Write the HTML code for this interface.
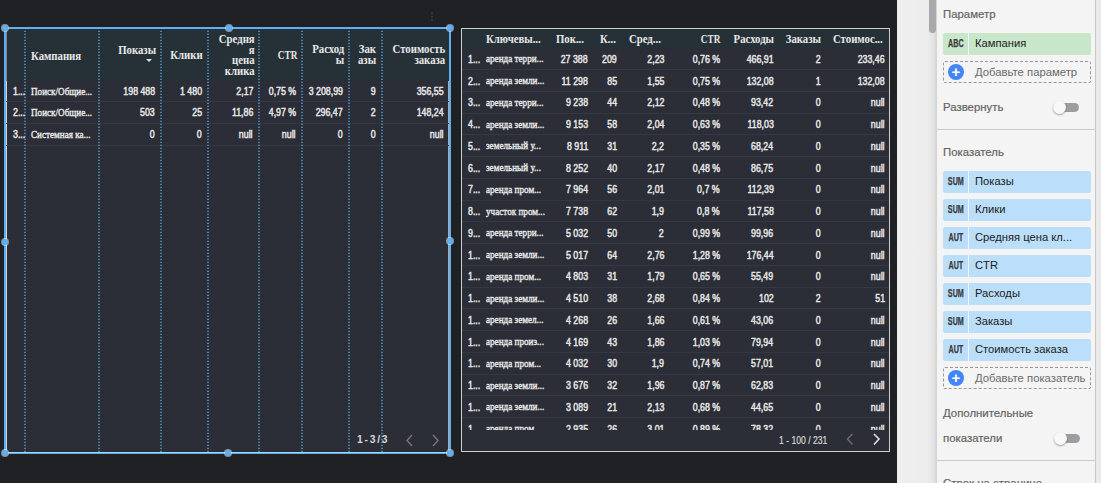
<!DOCTYPE html><html><head><meta charset="utf-8"><style>
*{margin:0;padding:0;box-sizing:border-box}
html,body{width:1101px;height:483px;overflow:hidden;background:#202124;font-family:"Liberation Sans",sans-serif}
.a{position:absolute;white-space:nowrap}
.hd{font-family:"Liberation Serif",serif;font-weight:bold;font-size:12.5px;color:#e8e8e8;line-height:10.6px;transform:scaleX(.86);transform-origin:0 0}
.sr{font-family:"Liberation Serif",serif;font-size:10.5px;color:#ececec;line-height:12px;transform:scaleX(.87);transform-origin:0 0;-webkit-text-stroke:0.35px #ececec}
.nm{font-family:"Liberation Sans",sans-serif;font-size:10px;color:#e8e8e8;line-height:12px;margin-top:0px;transform:scaleX(.88);transform-origin:0 0;-webkit-text-stroke:0.45px #e8e8e8}
.r{text-align:right;transform-origin:100% 0}
.dl{position:absolute;width:2px;background:linear-gradient(to bottom,#4f97d2 0 1.4px,transparent 1.4px);background-size:2px 3px;background-position:0 1.8px}
.hdl{position:absolute;width:8px;height:8px;border-radius:50%;background:#5eb0f5;box-shadow:0 0 0 1px rgba(220,235,250,.55)}
.sep{position:absolute;height:1px;background:#343744}
.pl{font-family:"Liberation Sans",sans-serif;color:#646464;font-size:11.4px;margin-top:0.6px;-webkit-text-stroke:0.2px #646464}
.chip{position:absolute;left:943px;width:148px;height:22px;border-radius:2px}
.chip .t{position:absolute;left:0;top:0;width:26px;height:22px;border-right:1px solid #f4f4f4;}
.chip .t span{position:absolute;left:0;top:0;width:26px;font-family:"Liberation Sans",sans-serif;font-weight:bold;font-size:10px;color:#3a3a3a;text-align:center;line-height:22px;transform:scaleX(.72);-webkit-text-stroke:0.25px #3a3a3a;transform-origin:12.5px 0}
.chip .n{position:absolute;left:32px;top:-1px;font-size:11.2px;color:#202020;line-height:22px}
</style></head><body>
<div class="a" style="left:6px;top:29px;width:443px;height:51.5px;background:#263137"></div>
<div class="a" style="left:6px;top:80.5px;width:443px;height:372px;background:#2b2e37"></div>
<div class="a" style="left:6px;top:29px;width:1px;height:51.5px;background:#7d868c"></div>
<div class="a" style="left:6px;top:80.5px;width:1px;height:372px;background:#d4d6d9"></div>
<div class="a" style="left:448px;top:80.5px;width:1px;height:372px;background:#a9abb0"></div>
<div class="sep" style="left:6px;top:101px;width:443px"></div>
<div class="sep" style="left:6px;top:123px;width:443px"></div>
<div class="sep" style="left:6px;top:145px;width:443px"></div>
<div class="dl" style="left:24px;top:29px;height:423px"></div>
<div class="dl" style="left:98px;top:29px;height:423px"></div>
<div class="dl" style="left:160px;top:29px;height:423px"></div>
<div class="dl" style="left:207px;top:29px;height:423px"></div>
<div class="dl" style="left:258px;top:29px;height:423px"></div>
<div class="dl" style="left:301px;top:29px;height:423px"></div>
<div class="dl" style="left:348px;top:29px;height:423px"></div>
<div class="dl" style="left:381px;top:29px;height:423px"></div>
<div class="a hd" style="left:31px;top:51px">Кампания</div>
<div class="a hd r" style="right:945px;top:45px">Показы</div>
<div class="a" style="left:146px;top:59px;width:0;height:0;border-left:3px solid transparent;border-right:3px solid transparent;border-top:3.5px solid #e0e0e0"></div>
<div class="a hd r" style="right:898.5px;top:50px">Клики</div>
<div class="a hd r" style="right:846.5px;top:34px">Средня<br>я<br>цена<br>клика</div>
<div class="a hd r" style="right:804px;top:50px;transform:scaleX(.74)">CTR</div>
<div class="a hd r" style="right:757px;top:44.3px">Расход<br>ы</div>
<div class="a hd r" style="right:725px;top:44.3px">Зак<br>азы</div>
<div class="a hd r" style="right:656px;top:44.3px">Стоимость<br>заказа</div>
<div class="a nm" style="left:13px;top:85.5px">1...</div>
<div class="a sr" style="left:31px;top:85.50px">Поиск/Общие...</div>
<div class="a nm r" style="right:946px;top:85.5px">198 488</div>
<div class="a nm r" style="right:899px;top:85.5px">1 480</div>
<div class="a nm r" style="right:848px;top:85.5px">2,17</div>
<div class="a nm r" style="right:805px;top:85.5px">0,75 %</div>
<div class="a nm r" style="right:758px;top:85.5px">3 208,99</div>
<div class="a nm r" style="right:725px;top:85.5px">9</div>
<div class="a nm r" style="right:657px;top:85.5px">356,55</div>
<div class="a nm" style="left:13px;top:107.3px">2...</div>
<div class="a sr" style="left:31px;top:107.30px">Поиск/Общие...</div>
<div class="a nm r" style="right:946px;top:107.3px">503</div>
<div class="a nm r" style="right:899px;top:107.3px">25</div>
<div class="a nm r" style="right:848px;top:107.3px">11,86</div>
<div class="a nm r" style="right:805px;top:107.3px">4,97 %</div>
<div class="a nm r" style="right:758px;top:107.3px">296,47</div>
<div class="a nm r" style="right:725px;top:107.3px">2</div>
<div class="a nm r" style="right:657px;top:107.3px">148,24</div>
<div class="a nm" style="left:13px;top:129.1px">3...</div>
<div class="a sr" style="left:31px;top:129.10px">Системная ка...</div>
<div class="a nm r" style="right:946px;top:129.1px">0</div>
<div class="a nm r" style="right:899px;top:129.1px">0</div>
<div class="a nm r" style="right:848px;top:129.1px">null</div>
<div class="a nm r" style="right:805px;top:129.1px">null</div>
<div class="a nm r" style="right:758px;top:129.1px">0</div>
<div class="a nm r" style="right:725px;top:129.1px">0</div>
<div class="a nm r" style="right:657px;top:129.1px">null</div>
<div class="a" style="left:357px;top:433.5px;font-size:10.3px;font-weight:bold;color:#d8d8d8;letter-spacing:1.75px">1-3/3</div>
<svg class="a" style="left:404px;top:433px" width="40" height="14" viewBox="0 0 40 14"><path d="M8 2 L3 7.5 L8 13" fill="none" stroke="#777" stroke-width="1.4"/><path d="M29 2 L34 7.5 L29 13" fill="none" stroke="#777" stroke-width="1.4"/></svg>
<div class="a" style="left:4px;top:27px;width:447px;height:2px;background:#5eb0f5"></div>
<div class="a" style="left:4px;top:452px;width:447px;height:2px;background:linear-gradient(#a6d3f7 0 1px,#5eb0f5 1px)"></div>
<div class="a" style="left:4px;top:27px;width:2px;height:427px;background:#5eb0f5"></div>
<div class="a" style="left:449px;top:27px;width:2px;height:427px;background:#5eb0f5"></div>
<div class="hdl" style="left:2.20px;top:25.00px;width:6px;height:6px"></div>
<div class="hdl" style="left:225.50px;top:24.80px;width:6px;height:6px"></div>
<div class="hdl" style="left:447.10px;top:25.00px;width:6px;height:6px"></div>
<div class="hdl" style="left:2.30px;top:238.50px;width:6px;height:6px"></div>
<div class="hdl" style="left:447.10px;top:238.20px;width:6px;height:6px"></div>
<div class="hdl" style="left:2.10px;top:450.00px;width:6px;height:6px"></div>
<div class="hdl" style="left:225.20px;top:450.00px;width:6px;height:6px"></div>
<div class="hdl" style="left:447.10px;top:450.10px;width:6px;height:6px"></div>
<div class="a" style="left:431px;top:12px;width:2px;height:2px;border-radius:50%;background:#3c3c3e"></div>
<div class="a" style="left:431px;top:15.5px;width:2px;height:2px;border-radius:50%;background:#3c3c3e"></div>
<div class="a" style="left:431px;top:19px;width:2px;height:2px;border-radius:50%;background:#3c3c3e"></div>
<div class="a" style="left:461px;top:28px;width:429px;height:424px;border:1px solid #cdcdcd;background:#2b2e37"></div>
<div class="a" style="left:462px;top:29px;width:427px;height:19px;background:#263137"></div>
<div class="a hd" style="left:486px;top:34px">Ключевы...</div>
<div class="a hd" style="left:556px;top:34px">Пок...</div>
<div class="a hd" style="left:600px;top:34px">К...</div>
<div class="a hd" style="left:629px;top:34px">Сред...</div>
<div class="a hd r" style="right:381px;top:34px;transform:scaleX(.74)">CTR</div>
<div class="a hd r" style="right:327px;top:34px">Расходы</div>
<div class="a hd r" style="right:280px;top:34px">Заказы</div>
<div class="a hd" style="left:833px;top:34px">Стоимос...</div>
<div class="a" style="left:462px;top:47.75px;width:427px;height:382.5px;overflow:hidden">
<div class="a nm" style="left:6px;top:6.00px">1...</div>
<div class="a sr" style="left:24px;top:5.50px">аренда терри...</div>
<div class="a nm r" style="right:301px;top:6.00px">27 388</div>
<div class="a nm r" style="right:272px;top:6.00px">209</div>
<div class="a nm r" style="right:225px;top:6.00px">2,23</div>
<div class="a nm r" style="right:169px;top:6.00px">0,76 %</div>
<div class="a nm r" style="right:115.5px;top:6.00px">466,91</div>
<div class="a nm r" style="right:68px;top:6.00px">2</div>
<div class="a nm r" style="right:4px;top:6.00px">233,46</div>
<div class="sep" style="left:0;top:21.25px;width:427px"></div>
<div class="a nm" style="left:6px;top:27.75px">2...</div>
<div class="a sr" style="left:24px;top:27.25px">аренда земли...</div>
<div class="a nm r" style="right:301px;top:27.75px">11 298</div>
<div class="a nm r" style="right:272px;top:27.75px">85</div>
<div class="a nm r" style="right:225px;top:27.75px">1,55</div>
<div class="a nm r" style="right:169px;top:27.75px">0,75 %</div>
<div class="a nm r" style="right:115.5px;top:27.75px">132,08</div>
<div class="a nm r" style="right:68px;top:27.75px">1</div>
<div class="a nm r" style="right:4px;top:27.75px">132,08</div>
<div class="sep" style="left:0;top:43.00px;width:427px"></div>
<div class="a nm" style="left:6px;top:49.50px">3...</div>
<div class="a sr" style="left:24px;top:49.00px">аренда терри...</div>
<div class="a nm r" style="right:301px;top:49.50px">9 238</div>
<div class="a nm r" style="right:272px;top:49.50px">44</div>
<div class="a nm r" style="right:225px;top:49.50px">2,12</div>
<div class="a nm r" style="right:169px;top:49.50px">0,48 %</div>
<div class="a nm r" style="right:115.5px;top:49.50px">93,42</div>
<div class="a nm r" style="right:68px;top:49.50px">0</div>
<div class="a nm r" style="right:4px;top:49.50px">null</div>
<div class="sep" style="left:0;top:64.75px;width:427px"></div>
<div class="a nm" style="left:6px;top:71.25px">4...</div>
<div class="a sr" style="left:24px;top:70.75px">аренда земли...</div>
<div class="a nm r" style="right:301px;top:71.25px">9 153</div>
<div class="a nm r" style="right:272px;top:71.25px">58</div>
<div class="a nm r" style="right:225px;top:71.25px">2,04</div>
<div class="a nm r" style="right:169px;top:71.25px">0,63 %</div>
<div class="a nm r" style="right:115.5px;top:71.25px">118,03</div>
<div class="a nm r" style="right:68px;top:71.25px">0</div>
<div class="a nm r" style="right:4px;top:71.25px">null</div>
<div class="sep" style="left:0;top:86.50px;width:427px"></div>
<div class="a nm" style="left:6px;top:93.00px">5...</div>
<div class="a sr" style="left:24px;top:92.50px">земельный у...</div>
<div class="a nm r" style="right:301px;top:93.00px">8 911</div>
<div class="a nm r" style="right:272px;top:93.00px">31</div>
<div class="a nm r" style="right:225px;top:93.00px">2,2</div>
<div class="a nm r" style="right:169px;top:93.00px">0,35 %</div>
<div class="a nm r" style="right:115.5px;top:93.00px">68,24</div>
<div class="a nm r" style="right:68px;top:93.00px">0</div>
<div class="a nm r" style="right:4px;top:93.00px">null</div>
<div class="sep" style="left:0;top:108.25px;width:427px"></div>
<div class="a nm" style="left:6px;top:114.75px">6...</div>
<div class="a sr" style="left:24px;top:114.25px">земельный у...</div>
<div class="a nm r" style="right:301px;top:114.75px">8 252</div>
<div class="a nm r" style="right:272px;top:114.75px">40</div>
<div class="a nm r" style="right:225px;top:114.75px">2,17</div>
<div class="a nm r" style="right:169px;top:114.75px">0,48 %</div>
<div class="a nm r" style="right:115.5px;top:114.75px">86,75</div>
<div class="a nm r" style="right:68px;top:114.75px">0</div>
<div class="a nm r" style="right:4px;top:114.75px">null</div>
<div class="sep" style="left:0;top:130.00px;width:427px"></div>
<div class="a nm" style="left:6px;top:136.50px">7...</div>
<div class="a sr" style="left:24px;top:136.00px">аренда пром...</div>
<div class="a nm r" style="right:301px;top:136.50px">7 964</div>
<div class="a nm r" style="right:272px;top:136.50px">56</div>
<div class="a nm r" style="right:225px;top:136.50px">2,01</div>
<div class="a nm r" style="right:169px;top:136.50px">0,7 %</div>
<div class="a nm r" style="right:115.5px;top:136.50px">112,39</div>
<div class="a nm r" style="right:68px;top:136.50px">0</div>
<div class="a nm r" style="right:4px;top:136.50px">null</div>
<div class="sep" style="left:0;top:151.75px;width:427px"></div>
<div class="a nm" style="left:6px;top:158.25px">8...</div>
<div class="a sr" style="left:24px;top:157.75px">участок пром...</div>
<div class="a nm r" style="right:301px;top:158.25px">7 738</div>
<div class="a nm r" style="right:272px;top:158.25px">62</div>
<div class="a nm r" style="right:225px;top:158.25px">1,9</div>
<div class="a nm r" style="right:169px;top:158.25px">0,8 %</div>
<div class="a nm r" style="right:115.5px;top:158.25px">117,58</div>
<div class="a nm r" style="right:68px;top:158.25px">0</div>
<div class="a nm r" style="right:4px;top:158.25px">null</div>
<div class="sep" style="left:0;top:173.50px;width:427px"></div>
<div class="a nm" style="left:6px;top:180.00px">9...</div>
<div class="a sr" style="left:24px;top:179.50px">аренда терри...</div>
<div class="a nm r" style="right:301px;top:180.00px">5 032</div>
<div class="a nm r" style="right:272px;top:180.00px">50</div>
<div class="a nm r" style="right:225px;top:180.00px">2</div>
<div class="a nm r" style="right:169px;top:180.00px">0,99 %</div>
<div class="a nm r" style="right:115.5px;top:180.00px">99,96</div>
<div class="a nm r" style="right:68px;top:180.00px">0</div>
<div class="a nm r" style="right:4px;top:180.00px">null</div>
<div class="sep" style="left:0;top:195.25px;width:427px"></div>
<div class="a nm" style="left:6px;top:201.75px">1...</div>
<div class="a sr" style="left:24px;top:201.25px">аренда земли...</div>
<div class="a nm r" style="right:301px;top:201.75px">5 017</div>
<div class="a nm r" style="right:272px;top:201.75px">64</div>
<div class="a nm r" style="right:225px;top:201.75px">2,76</div>
<div class="a nm r" style="right:169px;top:201.75px">1,28 %</div>
<div class="a nm r" style="right:115.5px;top:201.75px">176,44</div>
<div class="a nm r" style="right:68px;top:201.75px">0</div>
<div class="a nm r" style="right:4px;top:201.75px">null</div>
<div class="sep" style="left:0;top:217.00px;width:427px"></div>
<div class="a nm" style="left:6px;top:223.50px">1...</div>
<div class="a sr" style="left:24px;top:223.00px">аренда пром...</div>
<div class="a nm r" style="right:301px;top:223.50px">4 803</div>
<div class="a nm r" style="right:272px;top:223.50px">31</div>
<div class="a nm r" style="right:225px;top:223.50px">1,79</div>
<div class="a nm r" style="right:169px;top:223.50px">0,65 %</div>
<div class="a nm r" style="right:115.5px;top:223.50px">55,49</div>
<div class="a nm r" style="right:68px;top:223.50px">0</div>
<div class="a nm r" style="right:4px;top:223.50px">null</div>
<div class="sep" style="left:0;top:238.75px;width:427px"></div>
<div class="a nm" style="left:6px;top:245.25px">1...</div>
<div class="a sr" style="left:24px;top:244.75px">аренда земли...</div>
<div class="a nm r" style="right:301px;top:245.25px">4 510</div>
<div class="a nm r" style="right:272px;top:245.25px">38</div>
<div class="a nm r" style="right:225px;top:245.25px">2,68</div>
<div class="a nm r" style="right:169px;top:245.25px">0,84 %</div>
<div class="a nm r" style="right:115.5px;top:245.25px">102</div>
<div class="a nm r" style="right:68px;top:245.25px">2</div>
<div class="a nm r" style="right:4px;top:245.25px">51</div>
<div class="sep" style="left:0;top:260.50px;width:427px"></div>
<div class="a nm" style="left:6px;top:267.00px">1...</div>
<div class="a sr" style="left:24px;top:266.50px">аренда земел...</div>
<div class="a nm r" style="right:301px;top:267.00px">4 268</div>
<div class="a nm r" style="right:272px;top:267.00px">26</div>
<div class="a nm r" style="right:225px;top:267.00px">1,66</div>
<div class="a nm r" style="right:169px;top:267.00px">0,61 %</div>
<div class="a nm r" style="right:115.5px;top:267.00px">43,06</div>
<div class="a nm r" style="right:68px;top:267.00px">0</div>
<div class="a nm r" style="right:4px;top:267.00px">null</div>
<div class="sep" style="left:0;top:282.25px;width:427px"></div>
<div class="a nm" style="left:6px;top:288.75px">1...</div>
<div class="a sr" style="left:24px;top:288.25px">аренда произ...</div>
<div class="a nm r" style="right:301px;top:288.75px">4 169</div>
<div class="a nm r" style="right:272px;top:288.75px">43</div>
<div class="a nm r" style="right:225px;top:288.75px">1,86</div>
<div class="a nm r" style="right:169px;top:288.75px">1,03 %</div>
<div class="a nm r" style="right:115.5px;top:288.75px">79,94</div>
<div class="a nm r" style="right:68px;top:288.75px">0</div>
<div class="a nm r" style="right:4px;top:288.75px">null</div>
<div class="sep" style="left:0;top:304.00px;width:427px"></div>
<div class="a nm" style="left:6px;top:310.50px">1...</div>
<div class="a sr" style="left:24px;top:310.00px">аренда пром...</div>
<div class="a nm r" style="right:301px;top:310.50px">4 032</div>
<div class="a nm r" style="right:272px;top:310.50px">30</div>
<div class="a nm r" style="right:225px;top:310.50px">1,9</div>
<div class="a nm r" style="right:169px;top:310.50px">0,74 %</div>
<div class="a nm r" style="right:115.5px;top:310.50px">57,01</div>
<div class="a nm r" style="right:68px;top:310.50px">0</div>
<div class="a nm r" style="right:4px;top:310.50px">null</div>
<div class="sep" style="left:0;top:325.75px;width:427px"></div>
<div class="a nm" style="left:6px;top:332.25px">1...</div>
<div class="a sr" style="left:24px;top:331.75px">аренда земли...</div>
<div class="a nm r" style="right:301px;top:332.25px">3 676</div>
<div class="a nm r" style="right:272px;top:332.25px">32</div>
<div class="a nm r" style="right:225px;top:332.25px">1,96</div>
<div class="a nm r" style="right:169px;top:332.25px">0,87 %</div>
<div class="a nm r" style="right:115.5px;top:332.25px">62,83</div>
<div class="a nm r" style="right:68px;top:332.25px">0</div>
<div class="a nm r" style="right:4px;top:332.25px">null</div>
<div class="sep" style="left:0;top:347.50px;width:427px"></div>
<div class="a nm" style="left:6px;top:354.00px">1...</div>
<div class="a sr" style="left:24px;top:353.50px">аренда земли...</div>
<div class="a nm r" style="right:301px;top:354.00px">3 089</div>
<div class="a nm r" style="right:272px;top:354.00px">21</div>
<div class="a nm r" style="right:225px;top:354.00px">2,13</div>
<div class="a nm r" style="right:169px;top:354.00px">0,68 %</div>
<div class="a nm r" style="right:115.5px;top:354.00px">44,65</div>
<div class="a nm r" style="right:68px;top:354.00px">0</div>
<div class="a nm r" style="right:4px;top:354.00px">null</div>
<div class="sep" style="left:0;top:369.25px;width:427px"></div>
<div class="a nm" style="left:6px;top:375.75px">1...</div>
<div class="a sr" style="left:24px;top:375.25px">аренда пром...</div>
<div class="a nm r" style="right:301px;top:375.75px">2 935</div>
<div class="a nm r" style="right:272px;top:375.75px">26</div>
<div class="a nm r" style="right:225px;top:375.75px">3,01</div>
<div class="a nm r" style="right:169px;top:375.75px">0,89 %</div>
<div class="a nm r" style="right:115.5px;top:375.75px">78,32</div>
<div class="a nm r" style="right:68px;top:375.75px">0</div>
<div class="a nm r" style="right:4px;top:375.75px">null</div>
</div>
<div class="a" style="left:779px;top:434.5px;font-size:10px;color:#d8d8d8;transform:scaleX(.86);transform-origin:0 0;-webkit-text-stroke:.2px #d8d8d8">1 - 100 / 231</div>
<svg class="a" style="left:844px;top:432px" width="40" height="14" viewBox="0 0 40 14"><path d="M8.5 2 L3.5 7 L8.5 12.5" fill="none" stroke="#6a6a6a" stroke-width="1.6"/><path d="M30 2 L35 7 L30 12.5" fill="none" stroke="#e0e0e0" stroke-width="1.6"/></svg>
<div class="a" style="left:897px;top:0;width:40px;height:483px;background:linear-gradient(to right,#eeeeee 0,#ededed 75%,#e2e2e2 92%,#d2d2d2 100%)"></div>
<div class="a" style="left:929px;top:-6px;width:7px;height:39px;border-radius:4px;background:#a9a9a9"></div>
<div class="a" style="left:936px;top:0;width:160px;height:483px;background:#f4f4f4;border-left:1px solid #d4d4d4;border-right:1px solid #c8c8c8"></div>
<div class="a" style="left:1096px;top:0;width:5px;height:483px;background:#eaeaea"></div>
<div class="a pl" style="left:943px;top:7px">Параметр</div>
<div class="chip" style="top:33px;background:#c8e6c9"><div class="t"><span>ABC</span></div><div class="n">Кампания</div></div>
<div class="a" style="left:943px;top:61px;width:148px;height:22px;border:1px dashed #9a9a9a;border-radius:2px"></div>
<div class="a" style="left:948px;top:64px;width:16px;height:16px;border-radius:50%;background:#4285f4;color:#fff;font-size:15px;line-height:16px;text-align:center;font-weight:bold">+</div>
<div class="a pl" style="left:975px;top:65px;color:#6a6a6a;-webkit-text-stroke:0;font-size:11.3px">Добавьте параметр</div>
<div class="a pl" style="left:943px;top:100px">Развернуть</div>
<div class="a" style="left:1054px;top:103px;width:25px;height:9px;border-radius:5px;background:#9a9ea3"></div>
<div class="a" style="left:1053px;top:101px;width:13px;height:13px;border-radius:50%;background:#f8f8f8;box-shadow:0 1px 2px rgba(0,0,0,.35)"></div>
<div class="a" style="left:937px;top:129px;width:159px;height:1px;background:#cacaca"></div>
<div class="a pl" style="left:943px;top:145px">Показатель</div>
<div class="chip" style="top:171px;background:#bbdefb"><div class="t"><span>SUM</span></div><div class="n">Показы</div></div>
<div class="chip" style="top:199px;background:#bbdefb"><div class="t"><span>SUM</span></div><div class="n">Клики</div></div>
<div class="chip" style="top:227px;background:#bbdefb"><div class="t"><span>AUT</span></div><div class="n">Средняя цена кл...</div></div>
<div class="chip" style="top:255px;background:#bbdefb"><div class="t"><span>AUT</span></div><div class="n">CTR</div></div>
<div class="chip" style="top:283px;background:#bbdefb"><div class="t"><span>SUM</span></div><div class="n">Расходы</div></div>
<div class="chip" style="top:311px;background:#bbdefb"><div class="t"><span>SUM</span></div><div class="n">Заказы</div></div>
<div class="chip" style="top:339px;background:#bbdefb"><div class="t"><span>AUT</span></div><div class="n">Стоимость заказа</div></div>
<div class="a" style="left:943px;top:367px;width:148px;height:22px;border:1px dashed #9a9a9a;border-radius:2px"></div>
<div class="a" style="left:948px;top:370px;width:16px;height:16px;border-radius:50%;background:#4285f4;color:#fff;font-size:15px;line-height:16px;text-align:center;font-weight:bold">+</div>
<div class="a pl" style="left:975px;top:371px;color:#6a6a6a;-webkit-text-stroke:0;font-size:11.3px">Добавьте показатель</div>
<div class="a pl" style="left:943px;top:406px">Дополнительные</div>
<div class="a pl" style="left:943px;top:431px">показатели</div>
<div class="a" style="left:1055px;top:434px;width:25px;height:9px;border-radius:5px;background:#9a9ea3"></div>
<div class="a" style="left:1054px;top:432px;width:13px;height:13px;border-radius:50%;background:#f8f8f8;box-shadow:0 1px 2px rgba(0,0,0,.35)"></div>
<div class="a" style="left:937px;top:460px;width:159px;height:1px;background:#cacaca"></div>
<div class="a pl" style="left:943px;top:476px">Строк на странице</div>
</body></html>
